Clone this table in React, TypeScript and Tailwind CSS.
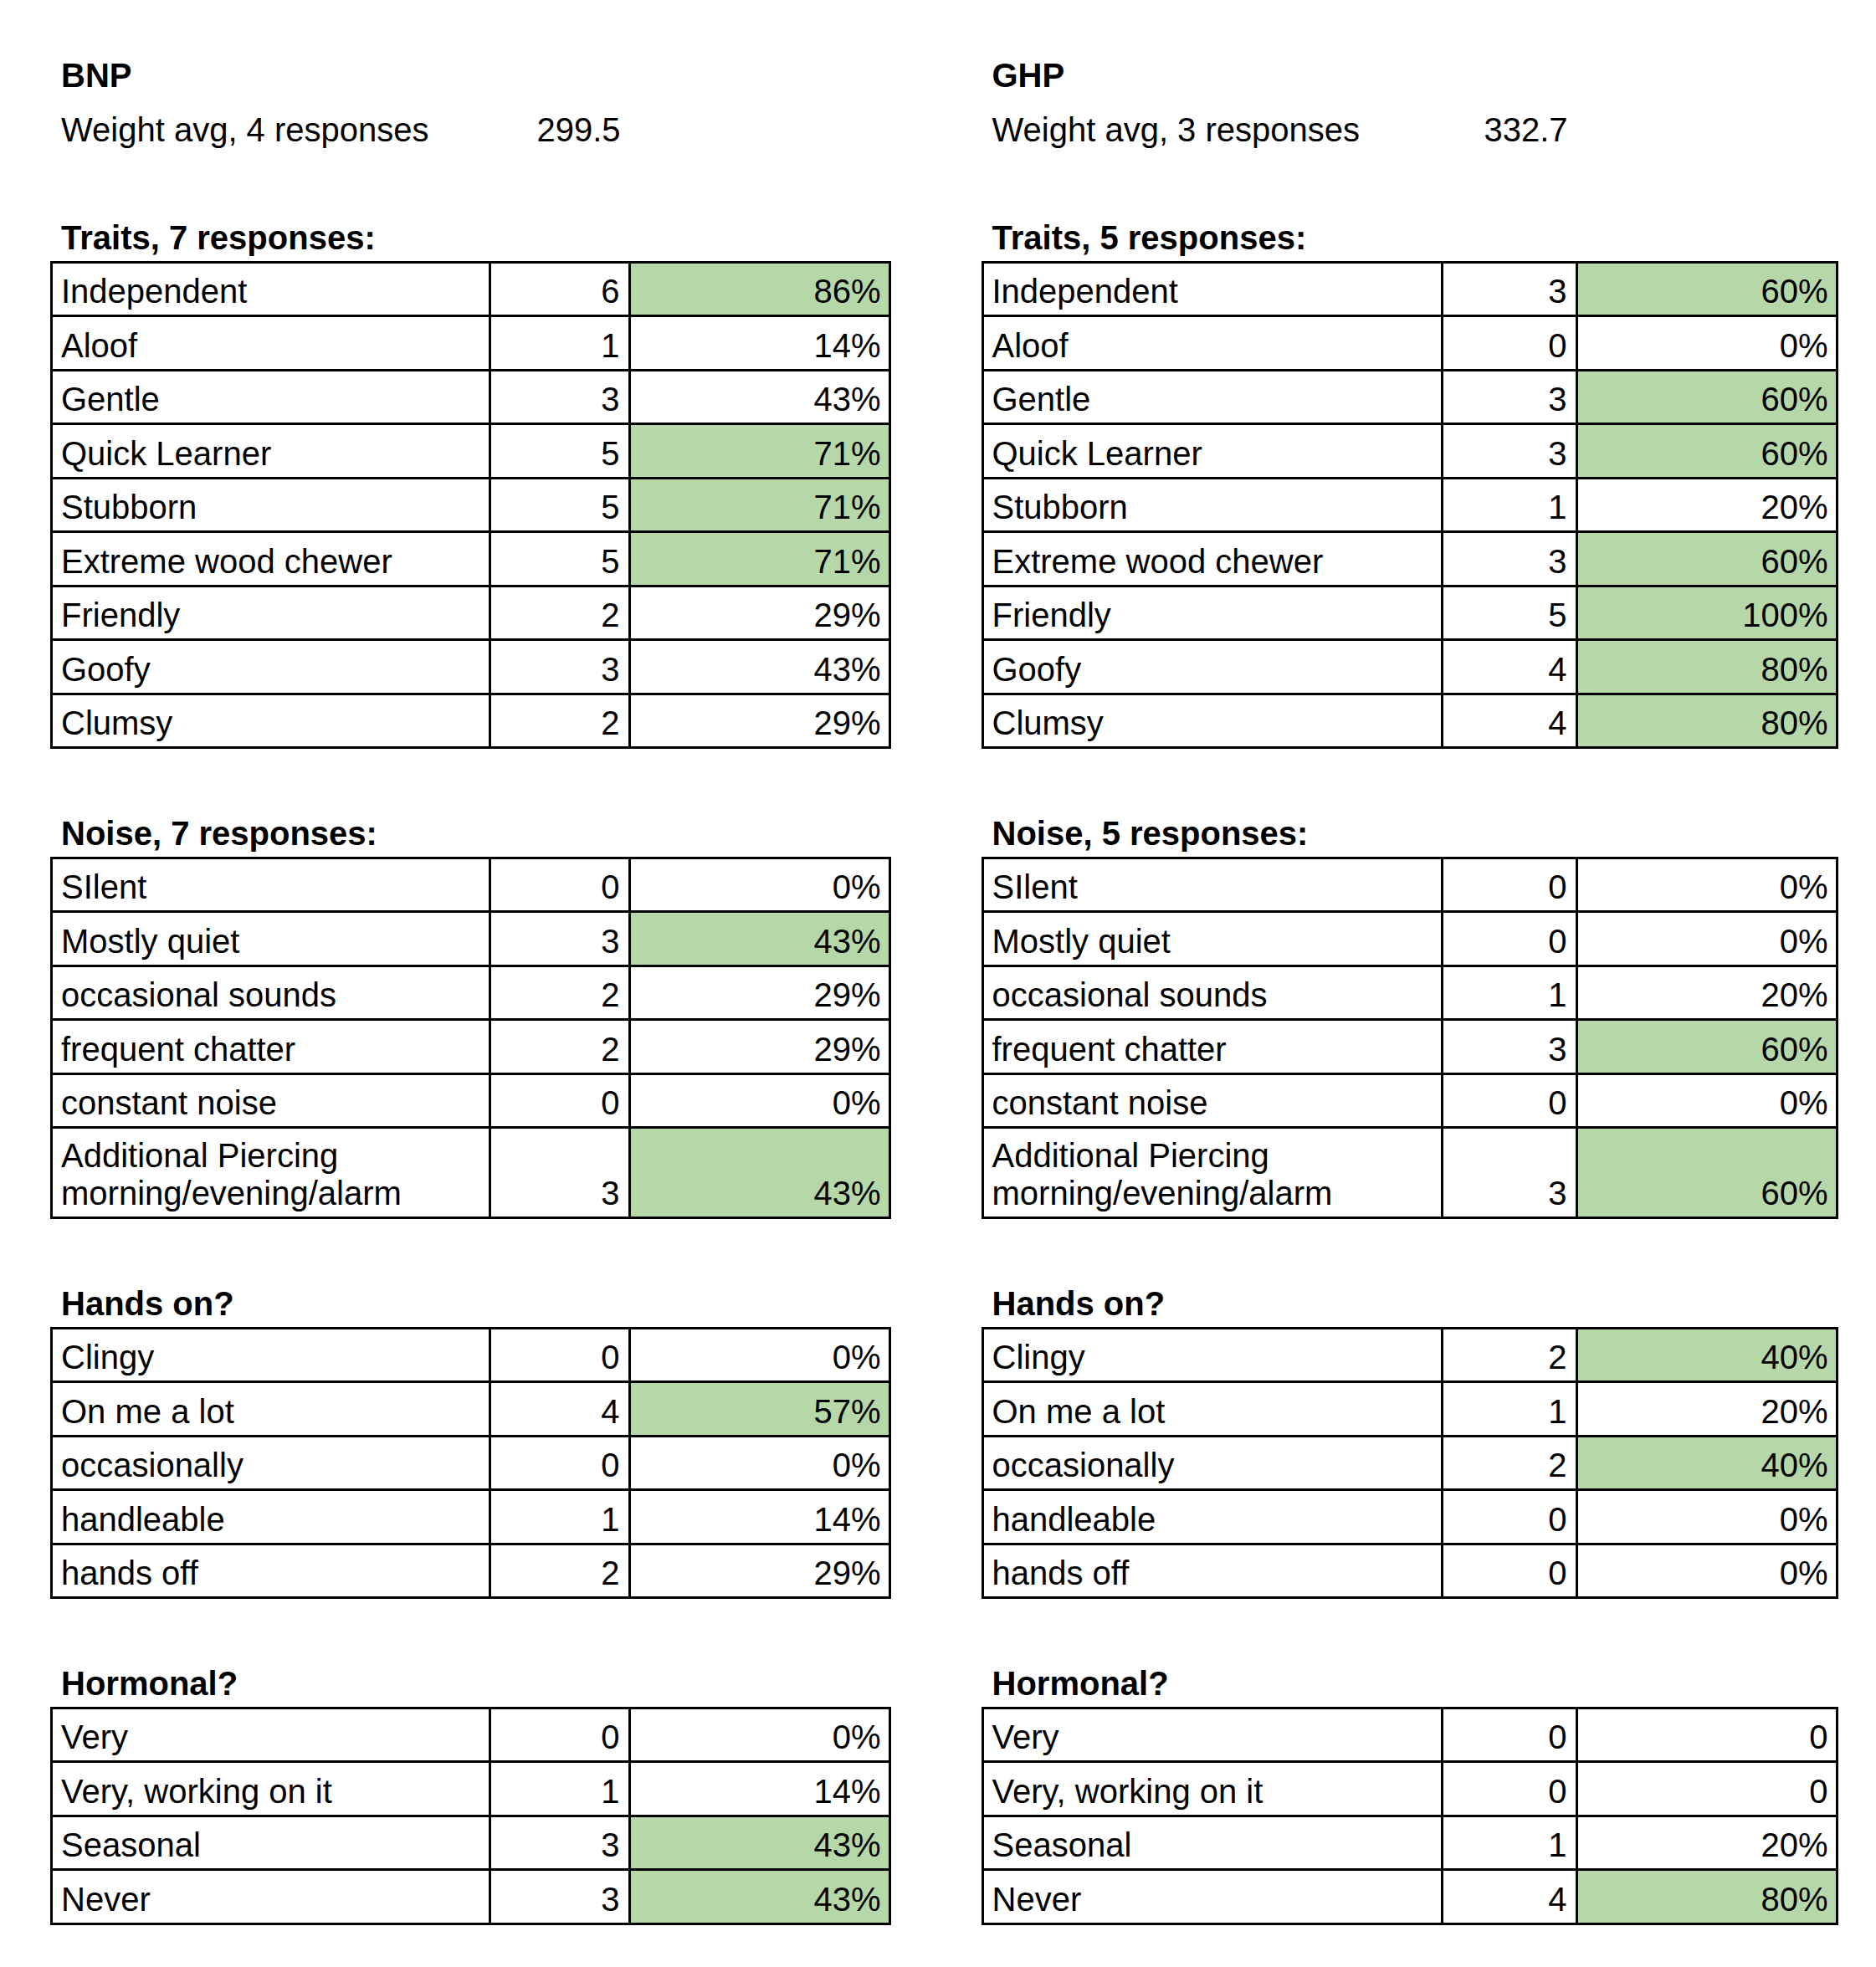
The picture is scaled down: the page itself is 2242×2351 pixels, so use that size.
import React from 'react';

type Row = { label: React.ReactNode; count: string; pct: string; hi?: boolean; tall?: boolean };

type Section = { title: string; rows: Row[] };

type Side = {
  name: string;
  weightLabel: string;
  weight: string;
  widths: [string, string, string];
  sections: Section[];
};

const piercing = (
  <>
    Additional Piercing
    <br />
    morning/evening/alarm
  </>
);

const bnp: Side = {
  name: 'BNP',
  weightLabel: 'Weight avg, 4 responses',
  weight: '299.5',
  widths: ['w-[523.5px]', 'w-[167px]', 'w-[311px]'],
  sections: [
    {
      title: 'Traits, 7 responses:',
      rows: [
        { label: 'Independent', count: '6', pct: '86%', hi: true },
        { label: 'Aloof', count: '1', pct: '14%' },
        { label: 'Gentle', count: '3', pct: '43%' },
        { label: 'Quick Learner', count: '5', pct: '71%', hi: true },
        { label: 'Stubborn', count: '5', pct: '71%', hi: true },
        { label: 'Extreme wood chewer', count: '5', pct: '71%', hi: true },
        { label: 'Friendly', count: '2', pct: '29%' },
        { label: 'Goofy', count: '3', pct: '43%' },
        { label: 'Clumsy', count: '2', pct: '29%' },
      ],
    },
    {
      title: 'Noise, 7 responses:',
      rows: [
        { label: 'SIlent', count: '0', pct: '0%' },
        { label: 'Mostly quiet', count: '3', pct: '43%', hi: true },
        { label: 'occasional sounds', count: '2', pct: '29%' },
        { label: 'frequent chatter', count: '2', pct: '29%' },
        { label: 'constant noise', count: '0', pct: '0%' },
        { label: piercing, count: '3', pct: '43%', hi: true, tall: true },
      ],
    },
    {
      title: 'Hands on?',
      rows: [
        { label: 'Clingy', count: '0', pct: '0%' },
        { label: 'On me a lot', count: '4', pct: '57%', hi: true },
        { label: 'occasionally', count: '0', pct: '0%' },
        { label: 'handleable', count: '1', pct: '14%' },
        { label: 'hands off', count: '2', pct: '29%' },
      ],
    },
    {
      title: 'Hormonal?',
      rows: [
        { label: 'Very', count: '0', pct: '0%' },
        { label: 'Very, working on it', count: '1', pct: '14%' },
        { label: 'Seasonal', count: '3', pct: '43%', hi: true },
        { label: 'Never', count: '3', pct: '43%', hi: true },
      ],
    },
  ],
};

const ghp: Side = {
  name: 'GHP',
  weightLabel: 'Weight avg, 3 responses',
  weight: '332.7',
  widths: ['w-[549px]', 'w-[161px]', 'w-[311px]'],
  sections: [
    {
      title: 'Traits, 5 responses:',
      rows: [
        { label: 'Independent', count: '3', pct: '60%', hi: true },
        { label: 'Aloof', count: '0', pct: '0%' },
        { label: 'Gentle', count: '3', pct: '60%', hi: true },
        { label: 'Quick Learner', count: '3', pct: '60%', hi: true },
        { label: 'Stubborn', count: '1', pct: '20%' },
        { label: 'Extreme wood chewer', count: '3', pct: '60%', hi: true },
        { label: 'Friendly', count: '5', pct: '100%', hi: true },
        { label: 'Goofy', count: '4', pct: '80%', hi: true },
        { label: 'Clumsy', count: '4', pct: '80%', hi: true },
      ],
    },
    {
      title: 'Noise, 5 responses:',
      rows: [
        { label: 'SIlent', count: '0', pct: '0%' },
        { label: 'Mostly quiet', count: '0', pct: '0%' },
        { label: 'occasional sounds', count: '1', pct: '20%' },
        { label: 'frequent chatter', count: '3', pct: '60%', hi: true },
        { label: 'constant noise', count: '0', pct: '0%' },
        { label: piercing, count: '3', pct: '60%', hi: true, tall: true },
      ],
    },
    {
      title: 'Hands on?',
      rows: [
        { label: 'Clingy', count: '2', pct: '40%', hi: true },
        { label: 'On me a lot', count: '1', pct: '20%' },
        { label: 'occasionally', count: '2', pct: '40%', hi: true },
        { label: 'handleable', count: '0', pct: '0%' },
        { label: 'hands off', count: '0', pct: '0%' },
      ],
    },
    {
      title: 'Hormonal?',
      rows: [
        { label: 'Very', count: '0', pct: '0' },
        { label: 'Very, working on it', count: '0', pct: '0' },
        { label: 'Seasonal', count: '1', pct: '20%' },
        { label: 'Never', count: '4', pct: '80%', hi: true },
      ],
    },
  ],
};

const cell = 'flex items-end border-r-[3px] border-b-[3px] border-black pb-[5px]';

const SideColumn = ({ side }: { side: Side }) => {
  const [w1, w2, w3] = side.widths;
  return (
    <div className="flex flex-col">
      {/* name + weight */}
      <div className="flex h-[64.5px] items-end pb-[6px] pl-[13px] font-bold">
        <div className={w1}>{side.name}</div>
      </div>
      <div className="flex h-[64.5px] items-end pb-[5px] pl-[3px]">
        <div className={`${w1} pl-[10px]`}>{side.weightLabel}</div>
        <div className={`${w2} pr-[12px] text-right`}>{side.weight}</div>
      </div>

      {side.sections.map((sec) => (
        <div key={sec.title} className="flex flex-col">
          <div className="h-[64px]" />
          <div className="flex h-[64.5px] items-end pb-[5px] pl-[13px] font-bold whitespace-nowrap">
            {sec.title}
          </div>
          <div className="border-l-[3px] border-t-[3px] border-black">
            {sec.rows.map((r, i) => (
              <div key={i} className={`flex ${r.tall ? 'h-[108px]' : 'h-[64.5px]'}`}>
                <div className={`${cell} ${w1} pl-[10px] whitespace-nowrap`}>
                  <div>{r.label}</div>
                </div>
                <div className={`${cell} ${w2} justify-end pr-[10px]`}>{r.count}</div>
                <div className={`${cell} ${w3} justify-end pr-[9px] ${r.hi ? 'bg-[#b6d7a8]' : ''}`}>
                  {r.pct}
                </div>
              </div>
            ))}
          </div>
        </div>
      ))}
    </div>
  );
};

export default function App() {
  return (
    <div className="min-h-[2351px] w-[2242px] bg-white text-black font-['Liberation_Sans',Arial,sans-serif] text-[40px] leading-[45px]">
      <div className="flex gap-[108px] pl-[60px] pt-[54px]">
        <SideColumn side={bnp} />
        <SideColumn side={ghp} />
      </div>
    </div>
  );
}
